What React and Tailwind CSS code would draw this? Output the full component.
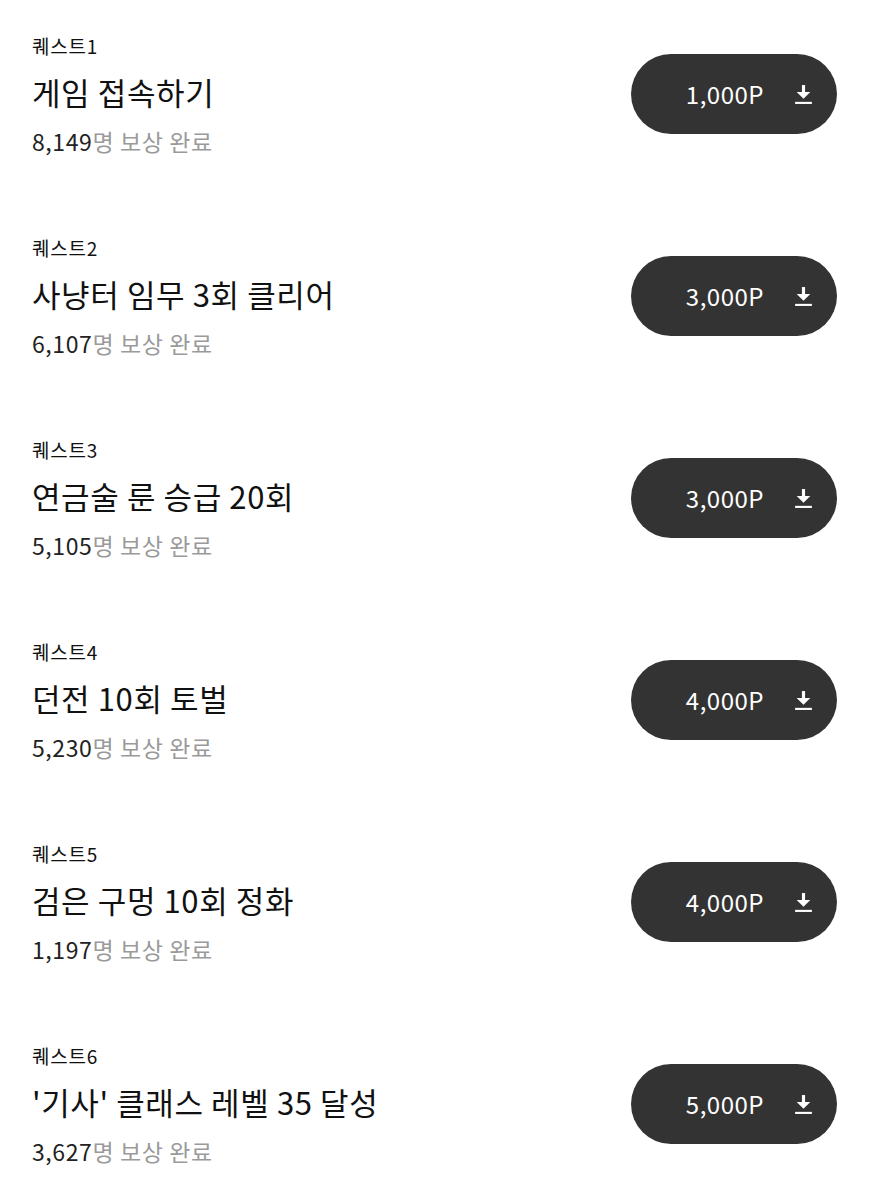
import React from "react";

const quests = [
  { n: "1", title: "게임 접속하기", count: "8,149", point: "1,000P" },
  { n: "2", title: "사냥터 임무 3회 클리어", count: "6,107", point: "3,000P" },
  { n: "3", title: "연금술 룬 승급 20회", count: "5,105", point: "3,000P" },
  { n: "4", title: "던전 10회 토벌", count: "5,230", point: "4,000P" },
  { n: "5", title: "검은 구멍 10회 정화", count: "1,197", point: "4,000P" },
  { n: "6", title: "'기사' 클래스 레벨 35 달성", count: "3,627", point: "5,000P" },
];

function DownloadIcon() {
  return (
    <svg width="19" height="21" viewBox="0 0 18 20" fill="#fff">
      <rect x="7.5" y="1" width="3" height="8" />
      <polygon points="2.5,7.5 15.5,7.5 9,14" />
      <rect x="1" y="17" width="16" height="2" />
    </svg>
  );
}

export default function App() {
  return (
    <div
      className="bg-white w-[869px] min-h-[1200px] pt-[54px] pl-[32px] pr-[32px] flex flex-col gap-[122px]"
      style={{ fontFamily: '"Noto Sans CJK KR", "Noto Sans", sans-serif' }}
    >
      {quests.map((q) => (
        <div key={q.n} className="flex items-center justify-between h-[80px]">
          <div className="flex flex-col mt-[2px]">
            <div className="text-[19px] leading-[24px] text-[#111] tracking-[0.8px]">퀘스트{q.n}</div>
            <div className="text-[31px] leading-[40px] text-[#111] mt-[14px] tracking-[0.6px]">{q.title}</div>
            <div className="text-[23px] leading-[30px] mt-[14px] tracking-[0.6px]">
              <span className="text-[#222]">{q.count}</span>
              <span className="text-[#9a9a9a]">명 보상 완료</span>
            </div>
          </div>
          <div className="w-[206px] h-[80px] rounded-full bg-[#333333] flex items-center justify-end pr-[24px]">
            <span className="text-white text-[24px] tracking-[0.5px]">{q.point}</span>
            <span className="ml-[30px] flex items-center"><DownloadIcon /></span>
          </div>
        </div>
      ))}
    </div>
  );
}
